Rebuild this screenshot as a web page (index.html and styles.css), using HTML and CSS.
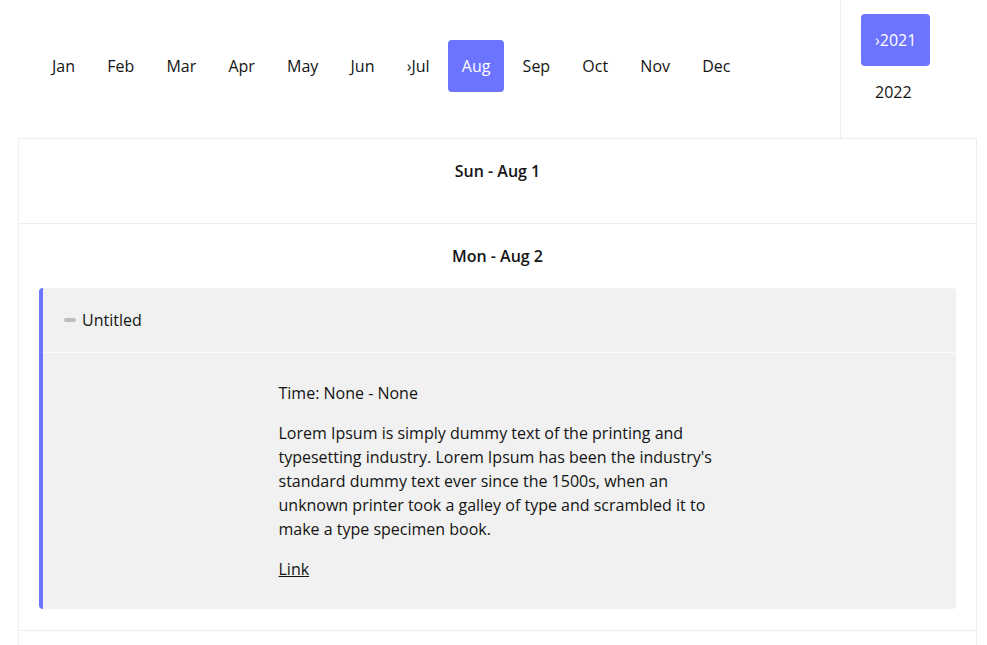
FILE: index.html
```html
<!DOCTYPE html>
<html>
<head>
<meta charset="utf-8">
<link rel="stylesheet" href="styles.css">
</head>
<body>
<header class="topbar">
  <nav class="months">
    <a class="month">Jan</a>
    <a class="month">Feb</a>
    <a class="month">Mar</a>
    <a class="month">Apr</a>
    <a class="month">May</a>
    <a class="month">Jun</a>
    <a class="month">›Jul</a>
    <a class="month active">Aug</a>
    <a class="month">Sep</a>
    <a class="month">Oct</a>
    <a class="month">Nov</a>
    <a class="month">Dec</a>
  </nav>
  <nav class="years">
    <a class="year active">›2021</a>
    <a class="year">2022</a>
  </nav>
</header>
<main class="calendar">
  <section class="day">
    <h2 class="day-title">Sun - Aug 1</h2>
  </section>
  <section class="day">
    <h2 class="day-title">Mon - Aug 2</h2>
    <article class="event">
      <div class="event-head">
        <span class="dash"></span>
        <span>Untitled</span>
      </div>
      <div class="event-body">
        <div class="event-inner">
          <p>Time: None - None</p>
          <p>Lorem Ipsum is simply dummy text of the printing and typesetting industry. Lorem Ipsum has been the industry's standard dummy text ever since the 1500s, when an unknown printer took a galley of type and scrambled it to make a type specimen book.</p>
          <p><a class="link" href="#">Link</a></p>
        </div>
      </div>
    </article>
  </section>
  <section class="day day-empty"></section>
</main>
</body>
</html>
```
FILE: styles.css
```css
* { box-sizing: border-box; }
html, body {
  margin: 0;
  padding: 0;
  background: #fff;
  font-family: "Open Sans", "Noto Sans", sans-serif;
  font-size: 16px;
  line-height: 24px;
  color: #141414;
}
.topbar {
  display: flex;
  height: 138px;
}
.months {
  flex: 1;
  display: flex;
  align-items: flex-start;
  gap: 4.2px;
  padding: 40px 0 0 38px;
}
.month, .year {
  display: block;
  padding: 14px 14px;
  border-radius: 4px;
  color: #141414;
  cursor: pointer;
}
.month.active, .year.active {
  background: #6b73ff;
  color: #fff;
}
.years {
  width: 147px;
  border-left: 1px solid #eeeeee;
  display: flex;
  flex-direction: column;
  align-items: flex-start;
  padding: 14px 0 0 20px;
}
.calendar {
  margin: 0 10px 0 18px;
  border: 1px solid #eeeeee;
  border-bottom: none;
}
.day {
  padding: 20px 20px 21px;
  border-bottom: 1px solid #eeeeee;
}
.day:first-child {
  padding-bottom: 20px;
}
.day-empty {
  height: 84px;
}
.day-title {
  margin: 0 0 20px;
  font-size: 16px;
  line-height: 24px;
  font-weight: 600;
  text-align: center;
}
.event {
  background: #f0f1f0;
  border-left: 4px solid #6b73ff;
  border-radius: 4px;
}
.event-head {
  display: flex;
  align-items: center;
  gap: 6px;
  padding: 20px 21px;
  border-bottom: 1px solid #fbfbfb;
}
.dash {
  display: block;
  width: 12px;
  height: 4px;
  border-radius: 2px;
  background: #bdbdbd;
}
.event-body {
  padding: 28px 20px 28px;
}
.event-inner {
  max-width: 442px;
  margin: 0 auto;
}
.event-inner p {
  margin: 0 0 16px;
}
.event-inner p:last-child {
  margin-bottom: 0;
}
.link {
  color: #141414;
  text-decoration: underline;
}
```
